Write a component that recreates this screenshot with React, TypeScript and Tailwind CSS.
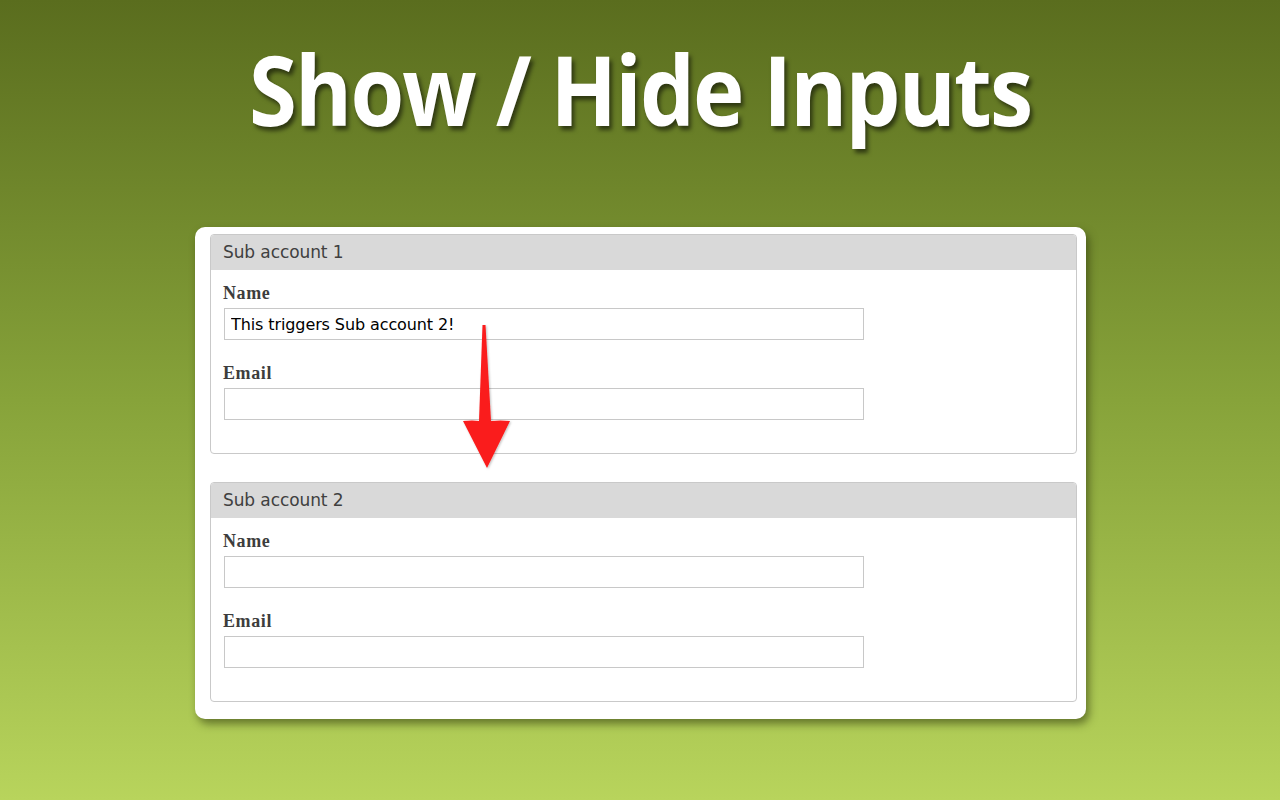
import React from "react";

const sections = [
  { title: "Sub account 1", name: "This triggers Sub account 2!" },
  { title: "Sub account 2", name: "" },
];

const Field = ({ label, value, first }: { label: string; value: string; first?: boolean }) => (
  <div className={first ? "mt-[13px]" : "mt-[23px]"}>
    <label className="block h-[20px] text-[18px] leading-[20px] font-bold text-[#3d3d3d] tracking-[0.6px] font-['Liberation_Serif',serif]">
      {label}
    </label>
    <input
      readOnly
      value={value}
      className="mt-[5px] ml-[1px] block w-[640px] h-[32px] border border-[#c8c8c8] bg-white px-[6px] text-[16px] text-black outline-none font-['DejaVu_Sans',sans-serif] tracking-[-0.1px]"
    />
  </div>
);

export default function App() {
  return (
    <div className="w-[1280px] h-[800px] overflow-hidden bg-gradient-to-b from-[#5a6d1e] via-[#87a33a] to-[#b8d45c] flex flex-col items-center">
      {/* Title */}
      <h1 className="mt-[34px] h-[110px] text-white font-bold text-[96px] leading-[110px] tracking-[-2px] font-['Open_Sans',sans-serif] [text-shadow:3px_4px_5px_rgba(0,0,0,0.55)] scale-x-[0.905]">
        Show / Hide Inputs
      </h1>

      {/* Card */}
      <div className="relative mt-[83px] ml-[1px] w-[891px] rounded-[10px] bg-white pl-[15px] pr-[9px] pt-[7px] pb-[17px] shadow-[3px_5px_8px_rgba(40,50,10,0.55)]">
        <div className="flex flex-col gap-[28px]">
          {sections.map((s) => (
            <div key={s.title} className="h-[220px] rounded-[4px] border border-[#c9c9c9] overflow-hidden">
              <div className="h-[35px] bg-[#d9d9d9] pl-[12px] flex items-center text-[17px] text-[#404040] font-['DejaVu_Sans',sans-serif] tracking-[-0.1px]">
                {s.title}
              </div>
              <div className="pl-[12px]">
                <Field label="Name" value={s.name} first />
                <Field label="Email" value="" />
              </div>
            </div>
          ))}
        </div>

        {/* Arrow */}
        <svg className="absolute left-0 top-0 pointer-events-none" width="891" height="492" viewBox="0 0 891 492">
          <defs>
            <filter id="sh" x="-50%" y="-50%" width="200%" height="200%">
              <feDropShadow dx="1" dy="1" stdDeviation="1" floodColor="#000" floodOpacity="0.25" />
            </filter>
          </defs>
          <path
            d="M287.5 98 L290.5 98 L296 194 Q305 193 315 194 L292 241 L268 194 Q278 193 284 194 Z"
            fill="#fa1c1c"
            filter="url(#sh)"
          />
        </svg>
      </div>
    </div>
  );
}
